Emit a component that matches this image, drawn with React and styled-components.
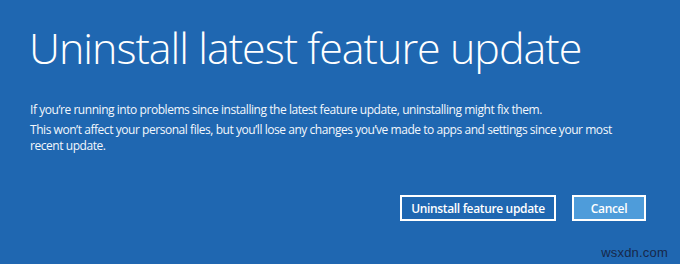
import React from "react";
import styled, { createGlobalStyle } from "styled-components";

const Global = createGlobalStyle`
  html, body { margin: 0; padding: 0; }
  body { background: #1f67b1; width: 680px; height: 264px; overflow: hidden; }
`;

const Screen = styled.div`
  box-sizing: border-box;
  width: 680px;
  height: 264px;
  background: #1f67b1;
  display: flex;
  flex-direction: column;
  font-family: "Open Sans", "Noto Sans", sans-serif;
  color: #ffffff;
`;

const Content = styled.div`
  padding: 0 30px;
  display: flex;
  flex-direction: column;
`;

const Title = styled.h1`
  margin: 18px 0 0 -1px;
  font-weight: 300;
  font-size: 43px;
  line-height: 60px;
  letter-spacing: -1px;
  color: #ffffff;
`;

const Paragraph = styled.p`
  margin: ${(p) => (p.$first ? "24px" : "4px")} 0 0 0;
  font-size: 12px;
  line-height: 16px;
  letter-spacing: -0.45px;
  color: #f3f7fc;
  max-width: 600px;
`;

const Actions = styled.div`
  display: flex;
  justify-content: flex-end;
  gap: 16px;
  padding: 0 34px 0 0;
  margin-top: 41px;
`;

const Button = styled.button`
  box-sizing: border-box;
  height: 26px;
  width: ${(p) => p.$width}px;
  border: 2px solid #ffffff;
  background: ${(p) => (p.$primary ? "#4e9cda" : "transparent")};
  color: #ffffff;
  font-family: "Open Sans", "Noto Sans", sans-serif;
  font-weight: 600;
  font-size: 12px;
  letter-spacing: -0.35px;
  padding: 0;
  display: flex;
  align-items: center;
  justify-content: center;
`;

const Footer = styled.div`
  margin-top: auto;
  display: flex;
  justify-content: flex-end;
  padding: 0 12px 4px 0;
`;

const Watermark = styled.span`
  font-family: "Liberation Sans", Arial, sans-serif;
  font-size: 13px;
  color: #17284a;
  letter-spacing: 0.2px;
`;

export default function App() {
  return (
    <>
      <Global />
      <Screen>
        <Content>
          <Title>Uninstall latest feature update</Title>
          <Paragraph $first>
            If you’re running into problems since installing the latest feature update, uninstalling might fix them.
          </Paragraph>
          <Paragraph>
            This won’t affect your personal files, but you’ll lose any changes you’ve made to apps and settings since your most recent update.
          </Paragraph>
        </Content>
        <Actions>
          <Button $width={156}>Uninstall feature update</Button>
          <Button $width={74} $primary>Cancel</Button>
        </Actions>
        <Footer>
          <Watermark>wsxdn.com</Watermark>
        </Footer>
      </Screen>
    </>
  );
}
